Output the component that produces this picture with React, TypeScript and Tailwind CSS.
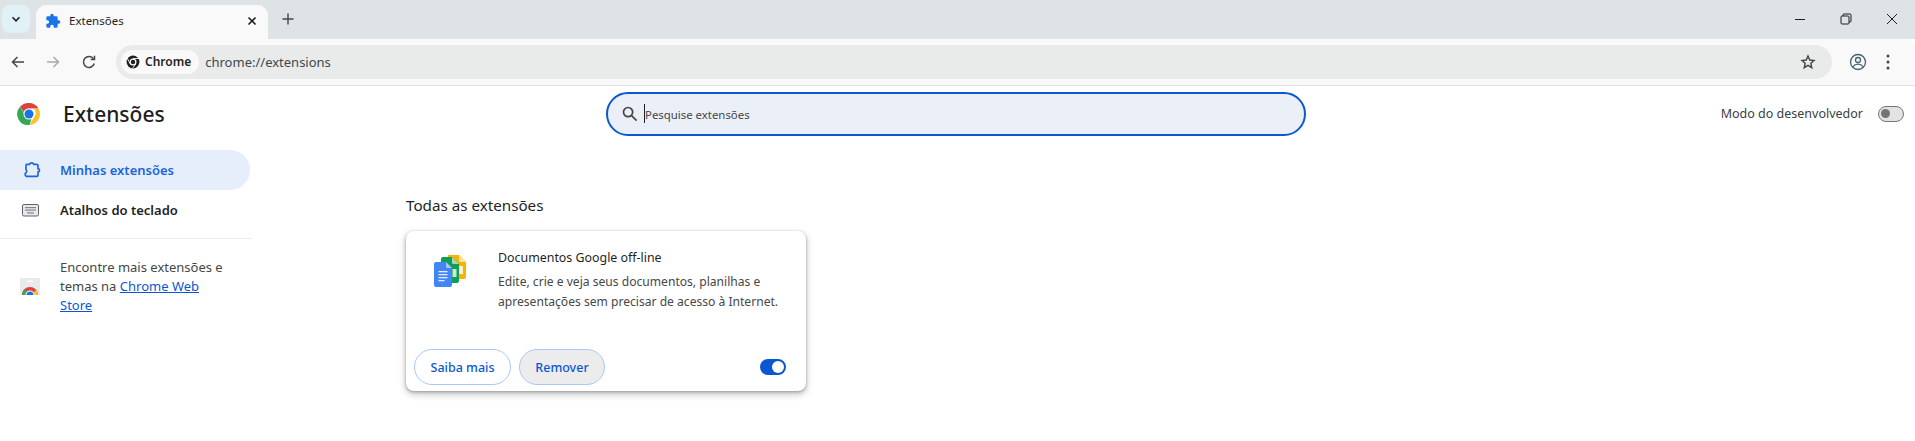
import React from "react";

const ChromeLogo = ({ size = 22 }: { size?: number }) => (
  <svg width={size} height={size} viewBox="0 0 48 48">
    <path d="M24 2a22 22 0 0 1 19.050 11H24a11 11 0 0 0-10.400 7.400L6 9.500A22 22 0 0 1 24 2z" fill="#db4437" />
    <path d="M43.050 13A22 22 0 0 1 25 46l9-15.500A11 11 0 0 0 32.500 13z" fill="#fbc02d" />
    <path d="M6 9.500l9.500 16a11 11 0 0 0 14.500 5.500L25 46A22 22 0 0 1 6 9.500z" fill="#34a853" />
    <circle cx="24" cy="24" r="11" fill="#fff" />
    <circle cx="24" cy="24" r="9" fill="#1a73e8" />
  </svg>
);

const Puzzle = ({ color, size = 16 }: { color: string; size?: number }) => (
  <svg width={size} height={size} viewBox="0 0 24 24" fill={color}>
    <path d="M20.500 11H19V7a2 2 0 0 0-2-2h-4V3.500a2.500 2.500 0 0 0-5 0V5H4a2 2 0 0 0-2 2v3.800h1.500a2.700 2.700 0 0 1 0 5.400H2V20a2 2 0 0 0 2 2h3.800v-1.500a2.700 2.700 0 0 1 5.400 0V22H17a2 2 0 0 0 2-2v-4h1.500a2.500 2.500 0 0 0 0-5z" />
  </svg>
);

const DocsIcon = () => (
  <svg width="32" height="32" viewBox="0 0 32 32">
    <path d="M14 0h11l7 7v15a2 2 0 0 1-2 2H14z" fill="#f4b400" />
    <path d="M25 0l7 7h-5.500A1.500 1.500 0 0 1 25 5.500z" fill="#fbe3a0" />
    <rect x="25" y="11" width="4" height="8" fill="#fff" opacity=".8" />
    <path d="M7 4a2 2 0 0 1 2-2h9l7 7v17a2 2 0 0 1-2 2H9a2 2 0 0 1-2-2z" fill="#0f9d58" />
    <path d="M18 2l7 7h-5.500A1.500 1.500 0 0 1 18 7.500z" fill="#a5d6b8" />
    <rect x="18.500" y="14" width="4" height="8" fill="#c9ead8" />
    <path d="M0 9a2 2 0 0 1 2-2h10l6 6v17a2 2 0 0 1-2 2H2a2 2 0 0 1-2-2z" fill="#4285f4" />
    <path d="M12 7l6 6h-4.500A1.500 1.500 0 0 1 12 11.500z" fill="#a9c6f8" />
    <rect x="4.500" y="16" width="9" height="1.300" fill="#e3edfd" />
    <rect x="4.500" y="19" width="9" height="1.300" fill="#e3edfd" />
    <rect x="4.500" y="22" width="9" height="1.300" fill="#e3edfd" />
    <rect x="4.500" y="25" width="6" height="1.300" fill="#e3edfd" />
  </svg>
);

const StoreIcon = () => (
  <svg width="20" height="17" viewBox="0 0 20 17">
    <rect x="0" y="0" width="20" height="17" fill="#e8eaed" />
    <rect x="7" y="2.500" width="6" height="1.500" rx=".7" fill="#fff" />
    <path d="M2 17a8 8 0 0 1 16 0z" fill="#db4437" />
    <path d="M2 17a8 8 0 0 1 3-6.200L8 17z" fill="#34a853" />
    <path d="M18 17a8 8 0 0 0-2-5.300L12 17z" fill="#fbc02d" />
    <path d="M5.500 17a4.500 4.500 0 0 1 9 0z" fill="#fff" />
    <path d="M6.500 17a3.500 3.500 0 0 1 7 0z" fill="#1a73e8" />
  </svg>
);

export default function App() {
  return (
    <div className="h-[441px] w-[1915px] overflow-hidden bg-white flex flex-col font-['Noto_Sans','Open_Sans',sans-serif] text-[#1f1f1f]">
      {/* Tab strip */}
      <div className="h-[39px] bg-[#dee3e6] flex items-start shrink-0">
        <div className="ml-[2px] mt-[5px] w-[28px] h-[28px] rounded-lg bg-[#e1f1f8] flex items-center justify-center">
          <svg width="12" height="12" viewBox="0 0 12 12" fill="none" stroke="#1f1f1f" strokeWidth="1.600"><path d="M2.500 4.300L6 7.800l3.500-3.500" /></svg>
        </div>
        <div className="ml-[6px] mt-[5px] w-[232px] h-[34px] bg-[#f9f9f9] rounded-t-[10px] flex items-center pl-[9px] pr-[11px] pb-[2px]">
          <Puzzle color="#1a73e8" size={16} />
          <span className="ml-[8px] text-[11.500px] flex-1 text-[#1f1f1f]">Extensões</span>
          <svg width="10" height="10" viewBox="0 0 10 10" stroke="#1f1f1f" strokeWidth="1.600"><path d="M1.500 1.500l7 7M8.500 1.500l-7 7" /></svg>
        </div>
        <div className="ml-[10px] mt-[9px] w-[20px] h-[20px] flex items-center justify-center">
          <svg width="12" height="12" viewBox="0 0 12 12" stroke="#444746" strokeWidth="1.400"><path d="M6 .5v11M.5 6h11" /></svg>
        </div>
        <div className="flex-1" />
        <div className="flex items-center mt-[7px] h-[24px]">
          <div className="w-[46px] flex justify-center">
            <svg width="12" height="12" viewBox="0 0 12 12" stroke="#1f1f1f" strokeWidth="1"><path d="M1 6.500h10" /></svg>
          </div>
          <div className="w-[46px] flex justify-center">
            <svg width="12" height="12" viewBox="0 0 12 12" fill="none" stroke="#1f1f1f" strokeWidth="1"><rect x="1" y="3" width="8" height="8" rx="1" /><path d="M3 3V2a1 1 0 0 1 1-1h6a1 1 0 0 1 1 1v6a1 1 0 0 1-1 1H9" /></svg>
          </div>
          <div className="w-[46px] flex justify-center">
            <svg width="12" height="12" viewBox="0 0 12 12" stroke="#1f1f1f" strokeWidth="1"><path d="M1 1l10 10M11 1L1 11" /></svg>
          </div>
        </div>
      </div>

      {/* Toolbar */}
      <div className="h-[47px] bg-[#f9f9f9] border-b border-[#e0e0e0] rounded-tr-lg flex items-center shrink-0">
        <div className="w-[36px] flex justify-center">
          <svg width="16" height="16" viewBox="0 0 16 16" fill="none" stroke="#444746" strokeWidth="1.500"><path d="M14 8H2.500M7.500 3L2.500 8l5 5" /></svg>
        </div>
        <div className="w-[36px] -ml-[1px] flex justify-center">
          <svg width="16" height="16" viewBox="0 0 16 16" fill="none" stroke="#a9abac" strokeWidth="1.500"><path d="M2 8h11.500M8.500 3l5 5-5 5" /></svg>
        </div>
        <div className="w-[36px] flex justify-center">
          <svg width="16" height="16" viewBox="0 0 16 16" fill="none" stroke="#444746" strokeWidth="1.500"><path d="M13.300 9.500A5.500 5.500 0 1 1 12.500 4.800" /><path d="M13.500 1.800v3.700H9.800" /></svg>
        </div>
        <div className="ml-[9px] w-[1716px] h-[34px] rounded-full bg-[#e9ebeb] flex items-center pl-[5px] pr-[16px]">
          <div className="h-[24px] bg-[#f9f9f9] rounded-full flex items-center pl-[5px] pr-[8px]">
            <svg width="14" height="14" viewBox="0 0 24 24"><circle cx="12" cy="12" r="11" fill="#1f1f1f" /><circle cx="12" cy="12" r="6" fill="#f9f9f9" /><circle cx="12" cy="12" r="3.800" fill="#1f1f1f" /><path d="M12 6h10M7 15L2 5M16.500 15.500L11 23" stroke="#f9f9f9" strokeWidth="1.500" /></svg>
            <span className="ml-[5px] text-[12px] font-semibold">Chrome</span>
          </div>
          <span className="ml-[6px] mt-[1px] text-[13px] text-[#40484d] flex-1">chrome://extensions</span>
          <svg width="16" height="16" viewBox="0 0 24 24" fill="none" stroke="#444746" strokeWidth="2.200"><path d="M12 3l2.700 6 6.300.7-4.700 4.300 1.300 6.500L12 17.200 6.400 20.500 7.700 14 3 9.700 9.300 9z" /></svg>
        </div>
        <div className="w-[40px] ml-[6px] flex justify-center">
          <svg width="18" height="18" viewBox="0 0 18 18" fill="none" stroke="#47626f" strokeWidth="1.300"><circle cx="9" cy="9" r="7.500" /><circle cx="9" cy="7" r="2.500" /><path d="M3.800 13.800c1.500-2 3.200-2.600 5.200-2.600s3.700.6 5.200 2.600" /></svg>
        </div>
        <div className="w-[20px] flex justify-center">
          <svg width="4" height="16" viewBox="0 0 4 16" fill="#444746"><circle cx="2" cy="2" r="1.500" /><circle cx="2" cy="8" r="1.500" /><circle cx="2" cy="14" r="1.500" /></svg>
        </div>
      </div>

      {/* Header */}
      <div className="h-[55px] flex items-center shrink-0">
        <div className="w-[606px] flex items-center pl-[17px]">
          <ChromeLogo size={24} />
          <span className="ml-[22px] mt-[3px] text-[21px] font-medium text-[#1f1f1f]">Extensões</span>
        </div>
        <div className="w-[700px] h-[44px] rounded-full border-2 border-[#0b57d0] bg-[#ebeff8] flex items-center pl-[13px]">
          <svg width="17" height="17" viewBox="0 0 24 24" fill="none" stroke="#444746" strokeWidth="2.400"><circle cx="10" cy="10" r="6.500" /><path d="M15 15l7 7" /></svg>
          <span className="ml-[6px] w-px h-[19px] bg-[#1f1f1f]" />
          <span className="mt-[2px] text-[11.400px] text-[#444746]">Pesquise extensões</span>
        </div>
        <div className="flex-1 flex items-center justify-end pr-[11px]">
          <span className="mt-[1px] text-[12.500px] text-[#3c4043]">Modo do desenvolvedor</span>
          <div className="ml-[15px] w-[26px] h-[16px] rounded-full bg-[#e3e3e3] border border-[#757575] flex items-center pl-[2px]">
            <span className="w-[9px] h-[9px] rounded-full bg-[#757575]" />
          </div>
        </div>
      </div>

      {/* Body */}
      <div className="flex flex-1">
        <div className="w-[252px] shrink-0 pt-[9px]">
          <div className="w-[250px] h-[40px] rounded-r-full bg-[#e6eefc] flex items-center pl-[23px] text-[#1a66d6]">
            <svg width="18" height="18" viewBox="0 0 24 24" fill="none" stroke="#1a66d6" strokeWidth="2.200" strokeLinejoin="round"><path d="M4.500 4.500h4.200a3 3 0 0 1 5.600 0h4.200a1.500 1.500 0 0 1 1.500 1.500v4.500a2 2 0 0 1 0 4V19a1.500 1.500 0 0 1-1.500 1.500H4.500L3 19v-2.500a3 3 0 0 0 1-5V6z" /></svg>
            <span className="ml-[19px] mt-[1px] text-[13px] font-semibold">Minhas extensões</span>
          </div>
          <div className="w-[250px] h-[40px] flex items-center pl-[22px]">
            <svg width="17" height="13" viewBox="0 0 17 13"><rect x=".5" y=".5" width="16" height="11.500" rx="1.500" fill="#e8eaed" stroke="#5f6368" /><rect x="3" y="3" width="11" height="1.200" fill="#80868b" /><rect x="3" y="5.500" width="11" height="1.200" fill="#80868b" /><rect x="5" y="8.300" width="7" height="1.200" fill="#80868b" /></svg>
            <span className="ml-[21px] mt-[1px] text-[13px] font-semibold">Atalhos do teclado</span>
          </div>
          <div className="mt-[8px] h-px w-[252px] bg-[#ececec]" />
          <div className="flex items-center pl-[20px] pt-[19px]">
            <StoreIcon />
            <p className="ml-[20px] text-[13px] leading-[19px] text-[#444746] w-[168px]">
              Encontre mais extensões e temas na <a className="text-[#0b57d0] underline">Chrome Web Store</a>
            </p>
          </div>
        </div>

        <div className="pl-[154px] pt-[53px]">
          <h2 className="text-[15.200px] leading-[22px] text-[#1f1f1f]">Todas as extensões</h2>
          <div className="mt-[15px] w-[400px] h-[160px] rounded-lg bg-white shadow-[0_1px_3px_rgba(60,64,67,0.4),0_3px_6px_1px_rgba(60,64,67,0.25)] flex flex-col">
            <div className="flex pl-[28px] pt-[24px]">
              <DocsIcon />
              <div className="ml-[32px] -mt-[7px]">
                <div className="text-[12.400px] leading-[20px] text-[#1f1f1f]">Documentos Google off-line</div>
                <p className="mt-[4px] text-[12.100px] leading-[20px] text-[#474747] w-[290px]">Edite, crie e veja seus documentos, planilhas e apresentações sem precisar de acesso à Internet.</p>
              </div>
            </div>
            <div className="mt-auto flex items-center pl-[8px] pr-[20px] pb-[6px]">
              <button className="w-[97px] h-[36px] pt-[2px] rounded-full border border-[#a8c7fa] text-[12.500px] font-medium text-[#0b57d0]">Saiba mais</button>
              <button className="ml-[8px] w-[86px] h-[36px] pt-[2px] rounded-full border border-[#a8c7fa] bg-[#ececec] text-[12.500px] font-medium text-[#0b57d0]">Remover</button>
              <div className="ml-auto w-[26px] h-[16px] rounded-full bg-[#0b57d0] flex items-center justify-end pr-[2px]">
                <span className="w-[12px] h-[12px] rounded-full bg-white" />
              </div>
            </div>
          </div>
        </div>
      </div>
    </div>
  );
}
